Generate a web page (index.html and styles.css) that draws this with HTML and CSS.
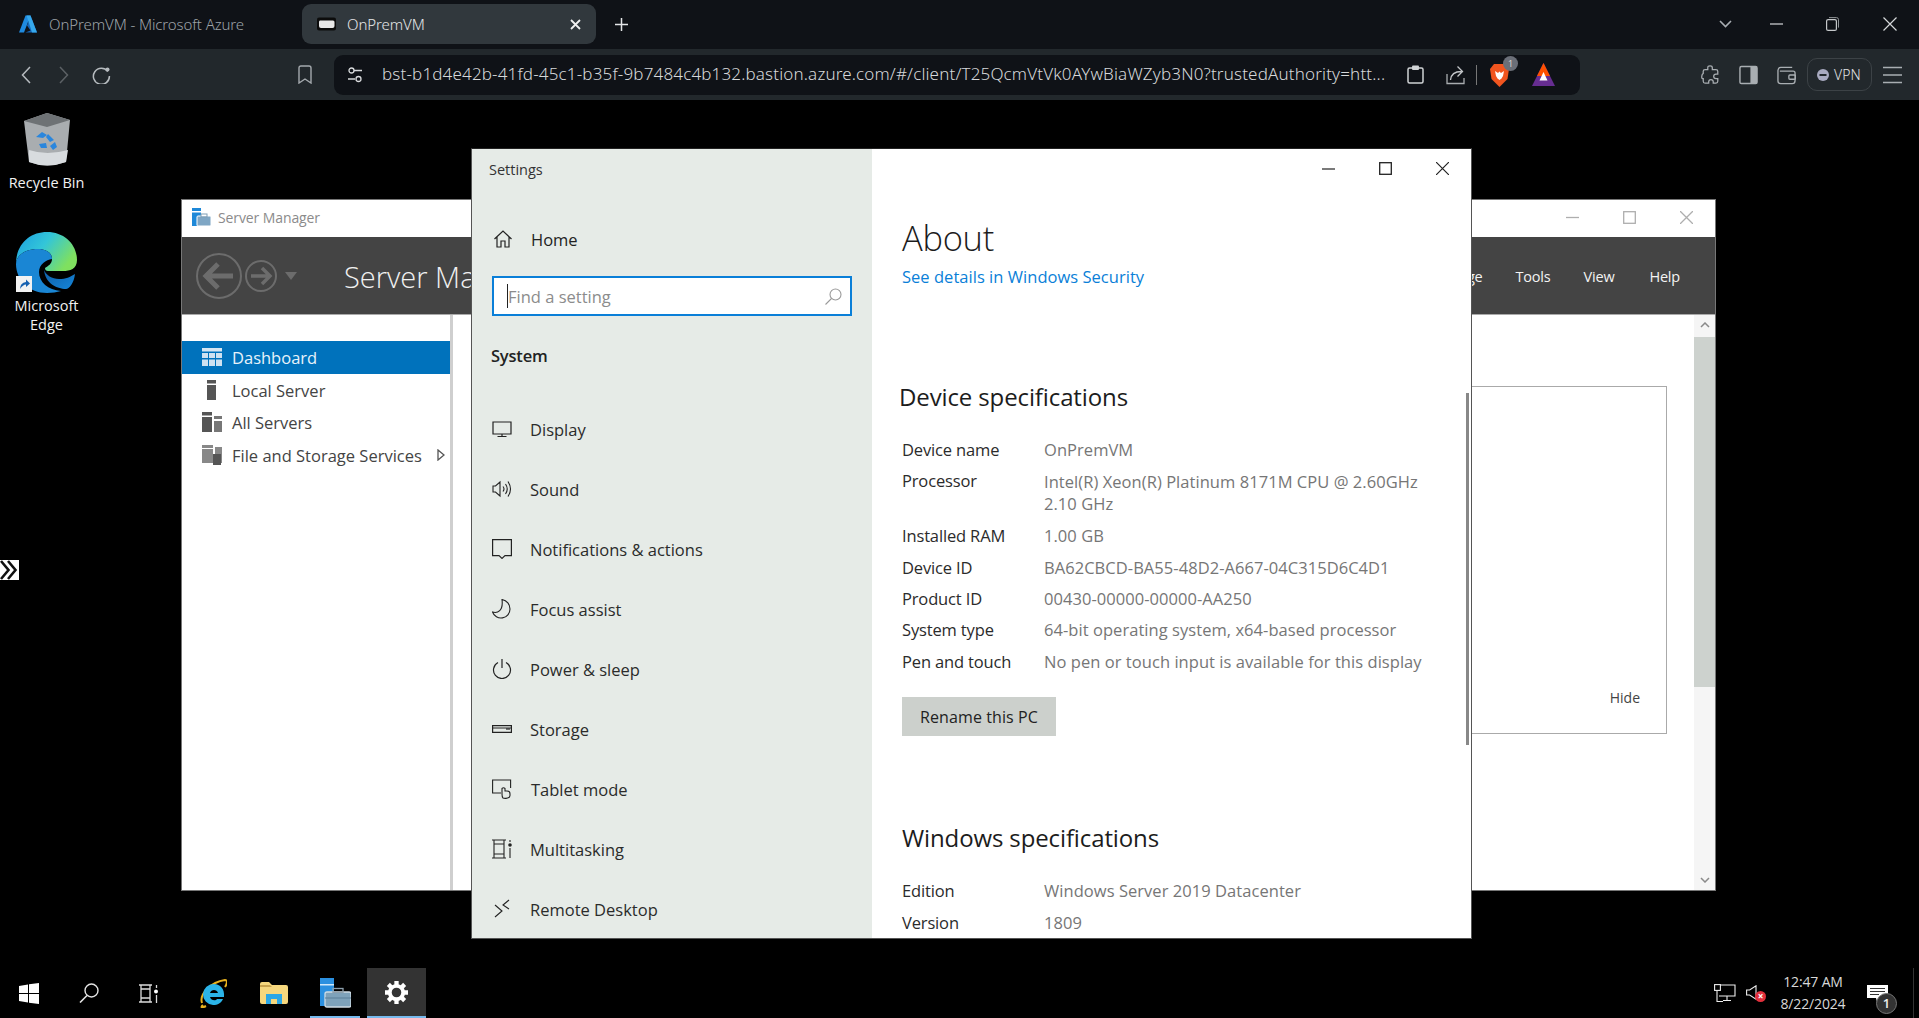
FILE: index.html
```html
<!DOCTYPE html>
<html lang="en">
<head>
<meta charset="utf-8">
<title>OnPremVM</title>
<link rel="stylesheet" href="styles.css">
</head>
<body>
<div class="tabstrip">
  <div class="tab">
    <svg class="fav-azure" viewBox="0 0 18 18"><path d="M6.500 0.500h5L5 17.500H0z" fill="#1f8ae0"/><path d="M11.500 0.500L18 17.500H6.500l5-2-3.500-5z" fill="#1565b8"/><path d="M7.500 0.500h4L18 17.500h-5z" fill="#36a8ec"/></svg>
    <span class="tab-label">OnPremVM - Microsoft Azure</span>
  </div>
  <div class="tab tab-active">
    <svg class="fav-cloud" viewBox="0 0 19 14"><rect x="0" y="0.500" width="19" height="13" rx="2" fill="#0c0c0c"/><path d="M3 3.500h13q1.500 0 1.500 1.500v4q0 2-2 2H4q-2 0-2-2V5q0-1.500 1-1.500z" fill="#e8e8e8"/></svg>
    <span class="tab-label tab-label-on">OnPremVM</span>
    <svg class="tab-x" viewBox="0 0 11 11"><path d="M1 1l9 9M10 1l-9 9" stroke="#f0f0f0" stroke-width="1.800"/></svg>
  </div>
  <svg class="tab-plus" viewBox="0 0 13 13"><path d="M6.500 0v13M0 6.500h13" stroke="#e4e6e8" stroke-width="1.500"/></svg>
  <div class="win-ctrls">
    <svg class="ic-chev" viewBox="0 0 13 8"><path d="M1 1l5.500 5.500L12 1" fill="none" stroke="#a9aeb3" stroke-width="1.600"/></svg>
    <svg class="ic-min" viewBox="0 0 13 2"><path d="M0 1h13" stroke="#d5d8da" stroke-width="1.200"/></svg>
    <svg class="ic-rest" viewBox="0 0 13 14"><rect x="0.600" y="2.600" width="9.800" height="10.800" rx="1.500" fill="none" stroke="#c5c8ca" stroke-width="1.200"/><path d="M3 .6h7.500q2 0 2 2v8" fill="none" stroke="#8f9396" stroke-width="1"/></svg>
    <svg class="ic-close" viewBox="0 0 14 14"><path d="M.5.5l13 13M13.500.5l-13 13" stroke="#d5d8da" stroke-width="1.200"/></svg>
  </div>
</div>

<div class="toolbar">
  <svg class="tb-back" viewBox="0 0 10 18"><path d="M9 1L1.500 9 9 17" fill="none" stroke="#b6bbbf" stroke-width="1.500"/></svg>
  <svg class="tb-fwd" viewBox="0 0 10 18"><path d="M1 1l7.500 8L1 17" fill="none" stroke="#5c6165" stroke-width="1.500"/></svg>
  <svg class="tb-reload" viewBox="0 0 19 19"><path d="M15.800 6.500A8 8 0 1 0 17.400 11" fill="none" stroke="#b6bbbf" stroke-width="1.500"/><circle cx="15.500" cy="4.500" r="2" fill="#b6bbbf"/></svg>
  <svg class="tb-bookmark" viewBox="0 0 14 19"><path d="M1 3q0-2 2-2h8q2 0 2 2v15l-6-4-6 4z" fill="none" stroke="#a4a9ad" stroke-width="1.400"/></svg>
  <div class="urlbar">
    <svg class="url-tune" viewBox="0 0 16 16"><circle cx="4.500" cy="3.500" r="2.500" fill="none" stroke="#d8dadc" stroke-width="1.300"/><path d="M7 3.500h8M1 12h7" stroke="#d8dadc" stroke-width="1.300"/><circle cx="11.500" cy="12" r="2.500" fill="none" stroke="#d8dadc" stroke-width="1.300"/></svg>
    <span class="url-text">bst-b1d4e42b-41fd-45c1-b35f-9b7484c4b132.bastion.azure.com/#/client/T25QcmVtVk0AYwBiaWZyb3N0?trustedAuthority=htt...</span>
    <svg class="url-clip" viewBox="0 0 17 19"><rect x="1" y="3" width="15" height="15" rx="1.500" fill="none" stroke="#d0d3d5" stroke-width="1.500"/><rect x="5" y="0.500" width="7" height="4.500" rx="1" fill="#d0d3d5"/></svg>
    <svg class="url-share" viewBox="0 0 19 20"><path d="M1 9v9.500h17V13" fill="none" stroke="#a8acaf" stroke-width="1.300"/><path d="M4.500 15C5 9 9 6.500 15.500 6.500M11.500 1.500l5 5-5 5" fill="none" stroke="#c3c6c9" stroke-width="1.300"/></svg>
    <span class="url-sep"></span>
    <div class="brave">
      <svg class="brave-lion" viewBox="0 0 19 24"><path d="M4 1h11l4 5-1.500 10-8 8-8-8L0 6z" fill="#f1551f"/><path d="M5 8l3 2 1.500-1.500L11 10l3-2-1 5-1.500 2.500-2 1.500-2-1.500L6 13z" fill="#fff"/></svg>
      <span class="brave-badge">1</span>
    </div>
    <svg class="url-bat" viewBox="0 0 23 23"><path d="M11.500 0L23 23H0z" fill="#662d91"/><path d="M11.500 0L18 13H5z" fill="#ff5000"/><path d="M11.500 9l4 8.500h-8z" fill="#fff"/></svg>
  </div>
  <div class="tb-right">
    <svg class="tb-ic" viewBox="0 0 20 22"><path d="M7 3q0-2 2.500-2T12 3v2h4q2 0 2 2v3h-2q-2.500 0-2.500 2.500T16 15h2v3q0 2-2 2h-3v-1.500q0-2.500-2.500-2.500T8 18.500V20H4q-2 0-2-2v-3H1.500Q0 15 .5 12t2-2.500H2V7q0-2 2-2h3z" fill="none" stroke="#a9aeb2" stroke-width="1.400"/></svg>
    <svg class="tb-ic" viewBox="0 0 20 20"><rect x="1" y="1" width="18" height="18" rx="1.500" fill="none" stroke="#a9aeb2" stroke-width="1.500"/><rect x="12" y="1" width="7" height="18" fill="#a9aeb2"/></svg>
    <svg class="tb-ic" viewBox="0 0 20 20"><path d="M16 2H4Q1.500 2 1 5v11q0 3 3 3h12q3 0 3-3V8q0-2-2-2H3" fill="none" stroke="#a9aeb2" stroke-width="1.400"/><rect x="12.500" y="10" width="7" height="4.500" rx="1" fill="none" stroke="#a9aeb2" stroke-width="1.400"/></svg>
    <div class="vpn">
      <svg class="vpn-dot" viewBox="0 0 12 12"><circle cx="6" cy="6" r="6" fill="#a8aac0"/><path d="M2.500 6h7" stroke="#22282c" stroke-width="2"/></svg>
      <span class="vpn-text">VPN</span>
    </div>
    <svg class="tb-menu" viewBox="0 0 19 18"><path d="M0 1.500h19M0 9h19M0 16.500h19" stroke="#a9aeb2" stroke-width="1.400"/></svg>
  </div>
</div>

<div class="desktop">
  <div class="chevrons">
    <svg viewBox="0 0 19 20"><path d="M0 0h19v20H0z" fill="#fff"/><path d="M1 1l7.500 9L1 19M8 1l7.500 9L8 19" fill="none" stroke="#111" stroke-width="2.600"/></svg>
  </div>

  <div class="desk-icon desk-bin">
    <svg class="bin-svg" viewBox="0 0 48 53">
      <path d="M1 8L24 0l23 7-4 42q-19 7-37 0z" fill="#a9adb0"/>
      <path d="M1 8l23 6 23-7-23-7z" fill="#6e7275"/>
      <path d="M6 37q18 6 39 0l-2 12q-19 7-37 0z" fill="#d8dcdf"/>
      <path d="M13 24l6-5 5 3-4 3zM25 21l6 6-4 2-4-5zM16 31l7-1 1 5-6 0zM27 33l5-4 2 5-4 3z" fill="#2a86dd"/>
    </svg>
    <span class="desk-label">Recycle Bin</span>
  </div>

  <div class="desk-icon desk-edge">
    <div class="edge-wrap">
      <svg class="edge-svg" viewBox="0 0 61 61">
        <defs>
          <linearGradient id="edgeA" x1="0" y1="0" x2="1" y2="0.500"><stop offset="0" stop-color="#1b9de2"/><stop offset="0.500" stop-color="#33c6d8"/><stop offset="1" stop-color="#7fe05f"/></linearGradient>
          <linearGradient id="edgeB" x1="0" y1="0" x2="1" y2="1"><stop offset="0" stop-color="#0f5fa8"/><stop offset="1" stop-color="#1585d8"/></linearGradient>
        </defs>
        <path d="M0 32C0 12 14 0 31 0c18 0 30 13 30 28 0 9-7 11-14 11H32c-2 0-3-1-3-3 3-2 7-4 7-9 0-7-7-10-14-10C10 17 0 23 0 32z" fill="url(#edgeA)"/>
        <path d="M0 32c0-9 10-15 22-15 7 0 14 3 14 10-6 1-13 5-13 13 0 10 9 18 22 19-4 1-9 2-14 2C13 61 0 48 0 32z" fill="#1a86d4"/>
        <path d="M28 38c1 13 13 19 22 19 3 0 8-6 9-15-5 3-9 5-16 5-7 0-13-4-15-9z" fill="url(#edgeB)"/>
      </svg>
      <svg class="shortcut-svg" viewBox="0 0 16 16"><rect width="16" height="16" fill="#f2f2f2"/><path d="M4 13q0-6 6-7V3.500L14 7.500 10 11V8.500q-3 0-6 4.500z" fill="#1560b0"/></svg>
    </div>
    <span class="desk-label">Microsoft<br>Edge</span>
  </div>

  <section class="sm-window">
    <header class="sm-title">
      <svg class="sm-title-ic" viewBox="0 0 19 19"><rect x="0" y="0" width="9" height="18" fill="#1e88d8"/><rect x="0" y="3" width="9" height="1.500" fill="#fff"/><rect x="5" y="8" width="14" height="10" rx="1" fill="#7fa6c4" stroke="#fff" stroke-width="1"/><rect x="9" y="6" width="6" height="3" fill="none" stroke="#7f9db4"/></svg>
      <span class="sm-title-text">Server Manager</span>
      <div class="sm-title-ctrls">
        <svg class="sm-ctl" viewBox="0 0 13 13"><path d="M0 6.500h13" stroke="#aeaeae" stroke-width="1.300"/></svg>
        <svg class="sm-ctl" viewBox="0 0 13 13"><rect x=".7" y=".7" width="11.600" height="11.600" fill="none" stroke="#aeaeae" stroke-width="1.300"/></svg>
        <svg class="sm-ctl" viewBox="0 0 13 13"><path d="M0 0l13 13M13 0L0 13" stroke="#aeaeae" stroke-width="1.300"/></svg>
      </div>
    </header>
    <div class="sm-head">
      <svg class="sm-back" viewBox="0 0 46 46"><circle cx="23" cy="23" r="22" fill="none" stroke="#6c6c6c" stroke-width="2"/><path d="M37 23H11M22 11L10 23l12 12" fill="none" stroke="#6c6c6c" stroke-width="5"/></svg>
      <svg class="sm-fwd" viewBox="0 0 32 32"><circle cx="16" cy="16" r="15" fill="none" stroke="#6c6c6c" stroke-width="2"/><path d="M6 16h19M17 8l8 8-8 8" fill="none" stroke="#6c6c6c" stroke-width="3.500"/></svg>
      <svg class="sm-drop" viewBox="0 0 12 8"><path d="M0 0h12L6 8z" fill="#6c6c6c"/></svg>
      <span class="sm-head-title">Server Ma</span>
      <nav class="sm-menu">
        <span>Manage</span><span>Tools</span><span>View</span><span>Help</span>
      </nav>
    </div>
    <div class="sm-body">
      <aside class="sm-side">
        <div class="sm-row sm-row-on">
          <svg class="sm-ic" viewBox="0 0 20 18"><rect width="20" height="3.500" fill="#d5e6f3"/><path d="M0 5h6v5H0zM7 5h6v5H7zM14 5h6v5h-6zM0 11.500h6V18H0zM7 11.500h6V18H7zM14 11.500h6V18h-6z" fill="#cfe2f1"/></svg>
          <span>Dashboard</span>
        </div>
        <div class="sm-row">
          <svg class="sm-ic" viewBox="0 0 20 20"><rect x="5" y="0" width="9" height="3.500" fill="#555"/><rect x="5" y="5" width="9" height="15" fill="#555"/></svg>
          <span>Local Server</span>
        </div>
        <div class="sm-row">
          <svg class="sm-ic" viewBox="0 0 20 20"><rect x="0" y="0" width="10" height="3.500" fill="#555"/><rect x="0" y="5" width="10" height="15" fill="#555"/><rect x="12" y="4" width="8" height="3" fill="#777"/><rect x="12" y="9" width="8" height="11" fill="#777"/></svg>
          <span>All Servers</span>
        </div>
        <div class="sm-row">
          <svg class="sm-ic" viewBox="0 0 20 20"><rect x="0" y="0" width="11" height="3" fill="#888"/><rect x="0" y="4" width="11" height="14" fill="#888"/><rect x="13" y="2" width="7" height="16" fill="#888"/><path d="M11 9h8v11h-8z" fill="#555"/></svg>
          <span class="sm-row-grow">File and Storage Services</span>
          <svg class="sm-tri" viewBox="0 0 8 12"><path d="M1 1l6 5-6 5z" fill="none" stroke="#555" stroke-width="1.300"/></svg>
        </div>
      </aside>
      <div class="sm-main">
        <div class="sm-panel"><span class="sm-hide">Hide</span></div>
      </div>
      <div class="sm-scroll">
        <svg class="sm-arrow" viewBox="0 0 10 6"><path d="M1 5l4-4 4 4" fill="none" stroke="#8a8a8a" stroke-width="1.500"/></svg>
        <div class="sm-thumb"></div>
        <svg class="sm-arrow sm-arrow-down" viewBox="0 0 10 6"><path d="M1 1l4 4 4-4" fill="none" stroke="#8a8a8a" stroke-width="1.500"/></svg>
      </div>
    </div>
  </section>

  <section class="settings">
    <aside class="set-side">
      <div class="set-app">Settings</div>
      <div class="set-home">
        <svg class="set-home-ic" viewBox="0 0 18 18"><path d="M.5 9L9 1l8.500 8M3 7v10h4v-6h4v6h4V7" fill="none" stroke="#222" stroke-width="1.200"/></svg>
        <span>Home</span>
      </div>
      <div class="set-search">
        <span class="set-caret"></span>
        <span class="set-ph">Find a setting</span>
        <svg class="set-search-ic" viewBox="0 0 17 17"><circle cx="10.500" cy="6.500" r="5.500" fill="none" stroke="#9a9a9a" stroke-width="1.100"/><path d="M6.500 10.500L.5 16.500" stroke="#9a9a9a" stroke-width="1.100"/></svg>
      </div>
      <div class="set-system">System</div>
      <nav class="set-nav">
        <div class="set-item">
          <svg class="set-ic" viewBox="0 0 20 20"><path d="M1 3h18v12H1zM10 15v2.500M5.500 17.500h9" fill="none" stroke="#222" stroke-width="1.200"/></svg>
          <span>Display</span>
        </div>
        <div class="set-item">
          <svg class="set-ic" viewBox="0 0 20 20"><path d="M1 7h2.500L8 3v14l-4.500-4H1zM11 7.500q2 2.500 0 5M13.500 5q3.500 5 0 10M16 2.500q5 7.500 0 15" fill="none" stroke="#222" stroke-width="1.100"/></svg>
          <span>Sound</span>
        </div>
        <div class="set-item">
          <svg class="set-ic" viewBox="0 0 20 20"><path d="M.6.6h18.800v16h-6.400L10 19.400 7 16.600H.6z" fill="none" stroke="#222" stroke-width="1.200"/></svg>
          <span>Notifications &amp; actions</span>
        </div>
        <div class="set-item">
          <svg class="set-ic" viewBox="0 0 20 20"><path d="M10 .5c5 1 8 5 8 9.500a9 9 0 0 1-17.500 3c5 1.500 11-1 9.500-12.500z" fill="none" stroke="#222" stroke-width="1.100"/></svg>
          <span>Focus assist</span>
        </div>
        <div class="set-item">
          <svg class="set-ic" viewBox="0 0 20 20"><path d="M6 3.500a8.500 8.500 0 1 0 8 0M10 0v9" fill="none" stroke="#222" stroke-width="1.200"/></svg>
          <span>Power &amp; sleep</span>
        </div>
        <div class="set-item">
          <svg class="set-ic" viewBox="0 0 20 20"><path d="M.6 6.600h18.800v6.800H.6zM.6 9h18.800M15 9v2M17 9v2" fill="none" stroke="#222" stroke-width="1.200"/></svg>
          <span>Storage</span>
        </div>
        <div class="set-item set-item-tablet">
          <svg class="set-ic" viewBox="0 0 20 20"><path d="M9 14H.6V1h18v8M11 19q-1-1-1-4V9.500q1.500-1.500 3 0V12h2q3 0 3 3v1.500Q18 19 14 19.400 12 19.500 11 19z" fill="none" stroke="#222" stroke-width="1.100"/></svg>
          <span>Tablet mode</span>
        </div>
        <div class="set-item">
          <svg class="set-ic" viewBox="0 0 20 20"><path d="M0 1h14M0 19h14M2 1v18M2 5h10v10H2zM12 1v18M18 1v2M18 9v10" fill="none" stroke="#222" stroke-width="1.100"/><circle cx="18" cy="6" r="1.800" fill="#222"/></svg>
          <span>Multitasking</span>
        </div>
        <div class="set-item">
          <svg class="set-ic" viewBox="0 0 20 20"><path d="M3 6l7 6-7 6M17 1l-6 5 6 4" fill="none" stroke="#222" stroke-width="1.100"/></svg>
          <span>Remote Desktop</span>
        </div>
      </nav>
    </aside>
    <main class="set-main">
      <div class="set-ctrls">
        <svg class="set-ctl" viewBox="0 0 13 13"><path d="M0 7h13" stroke="#222" stroke-width="1.200"/></svg>
        <svg class="set-ctl" viewBox="0 0 13 13"><rect x=".7" y=".7" width="11.600" height="11.600" fill="none" stroke="#222" stroke-width="1.300"/></svg>
        <svg class="set-ctl" viewBox="0 0 13 13"><path d="M0 0l13 13M13 0L0 13" stroke="#222" stroke-width="1.200"/></svg>
      </div>
      <h1 class="about">About</h1>
      <a class="sec-link">See details in Windows Security</a>
      <h2 class="sec-title sec-device">Device specifications</h2>
      <dl class="specs">
        <dt>Device name</dt><dd>OnPremVM</dd>
        <dt>Processor</dt><dd class="dd-two">Intel(R) Xeon(R) Platinum 8171M CPU @ 2.60GHz<br>2.10 GHz</dd>
        <dt>Installed RAM</dt><dd>1.00 GB</dd>
        <dt>Device ID</dt><dd>BA62CBCD-BA55-48D2-A667-04C315D6C4D1</dd>
        <dt>Product ID</dt><dd>00430-00000-00000-AA250</dd>
        <dt>System type</dt><dd>64-bit operating system, x64-based processor</dd>
        <dt>Pen and touch</dt><dd>No pen or touch input is available for this display</dd>
      </dl>
      <div class="rename">Rename this PC</div>
      <h2 class="sec-title sec-windows">Windows specifications</h2>
      <dl class="specs">
        <dt>Edition</dt><dd>Windows Server 2019 Datacenter</dd>
        <dt>Version</dt><dd>1809</dd>
      </dl>
      <div class="set-scroll"></div>
    </main>
  </section>

  <footer class="taskbar">
    <svg class="tk-win" viewBox="0 0 20 21"><path d="M0 3l9-1.500V10H0zM10 1.300L20 0v10H10zM0 11h9v8.500L0 18zM10 11h10v10l-10-1.300z" fill="#fff"/></svg>
    <svg class="tk-search" viewBox="0 0 20 20"><circle cx="12.500" cy="7.500" r="6.500" fill="none" stroke="#e4e4e4" stroke-width="1.400"/><path d="M8 12.500L1 19.500" stroke="#e4e4e4" stroke-width="1.600"/></svg>
    <svg class="tk-view" viewBox="0 0 19 19"><path d="M0 1h13M0 18h13M2 1v17M2 5h9v9H2zM11 1v17M17.500 1v3M17.500 11v8" fill="none" stroke="#dcdcdc" stroke-width="1.300"/><circle cx="17" cy="7.500" r="2" fill="#fff"/></svg>
    <svg class="tk-ie" viewBox="0 0 28 29"><path d="M3 24C0 15 12 3 26 1c3 0 2 4 0 7" fill="none" stroke="#e8b21f" stroke-width="2"/><path d="M4 26C1 29 3 29 7 27" fill="none" stroke="#e8b21f" stroke-width="2"/><path d="M15 5a10.500 10.500 0 0 0-1 21c5 0 8-2 10-6h-6c-1 2-6 2-7-2h14C26 10 21 5 15 5zm-4 9c1-4 7-4 8 0z" fill="#2bb4e8"/></svg>
    <svg class="tk-folder" viewBox="0 0 28 22"><path d="M0 2q0-2 2-2h7l3 3h14q2 0 2 2v15q0 2-2 2H2q-2 0-2-2z" fill="#f6d77d"/><path d="M0 3h10l2 2H0z" fill="#c9a34c"/><path d="M6 12h16v10h-5v-5h-6v5H6z" fill="#2ba7e6"/></svg>
    <svg class="tk-sm" viewBox="0 0 31 30"><rect x="0" y="0" width="14" height="28" fill="#2b90e0"/><rect x="0" y="6" width="14" height="1.500" fill="#d0e8fa"/><rect x="5" y="14" width="26" height="15" rx="2" fill="#7ea2ba" stroke="#cfdbe4" stroke-width="1.300"/><rect x="13" y="10.500" width="10" height="4" fill="none" stroke="#8ea0ad" stroke-width="1.300"/><path d="M5 20h26" stroke="#5a7e98"/></svg>
    <span class="tk-sm-line"></span>
    <div class="tk-settings">
      <svg class="tk-gear" viewBox="0 0 24 24"><circle cx="12" cy="12" r="7" fill="none" stroke="#fff" stroke-width="4"/><path d="M12 0v5M12 19v5M0 12h5M19 12h5M3.500 3.500L7 7M17 17l3.500 3.500M20.500 3.500L17 7M7 17l-3.500 3.500" stroke="#fff" stroke-width="4.500"/></svg>
    </div>
    <div class="tray">
      <svg class="tray-net" viewBox="0 0 22 18"><path d="M5 1h16v11H5M13 12v4.500M9 16.500h8M3 6v11.500h6" fill="none" stroke="#eee" stroke-width="1.100"/><rect x=".6" y=".6" width="5.800" height="5.800" fill="#000" stroke="#eee" stroke-width="1.100"/></svg>
      <div class="tray-vol">
        <svg class="tray-spk" viewBox="0 0 11 15"><path d="M.6 5h3L10 .8v13.400L3.600 10h-3z" fill="none" stroke="#eee" stroke-width="1.100"/></svg>
        <span class="tray-mute">×</span>
      </div>
      <div class="clock"><span>12:47 AM</span><span>8/22/2024</span></div>
      <div class="notif">
        <svg class="notif-ic" viewBox="0 0 21 17"><path d="M0 0h21v13h-8l-3 4-1-4H0z" fill="#fff"/><path d="M3 3.500h15M3 6.500h15M3 9.500h9" stroke="#333" stroke-width="1"/></svg>
        <span class="notif-badge">1</span>
      </div>
      <span class="tray-end"></span>
    </div>
  </footer>
</div>
</body>
</html>
```

FILE: styles.css
```css
* { box-sizing: border-box; }
html, body { margin: 0; height: 100%; }
body {
  width: 1919px; height: 1018px; overflow: hidden;
  display: flex; flex-direction: column;
  background: #000;
  font-family: "Open Sans", "Noto Sans", sans-serif;
  color: #222;
}
svg { display: block; flex: none; }

/* browser tab strip */
.tabstrip {
  height: 49px; flex: none; background: #0f1217;
  display: flex; align-items: center; padding: 0 0 1px 6px;
}
.tab {
  width: 296px; height: 40px; display: flex; align-items: center;
  padding-left: 13px; border-radius: 9px;
}
.tab-active { width: 294px; background: #31383d; padding-left: 15px; margin-right: 19px; }
.fav-azure { width: 18px; height: 18px; margin-right: 12px; }
.fav-cloud { width: 19px; height: 14px; margin-right: 11px; }
.tab-label { font-family: "Noto Sans", sans-serif; font-size: 15px; color: #9ea3a8; font-weight: 300; white-space: nowrap; letter-spacing: -.1px; }
.tab-label-on { color: #e4e6e8; flex: 1; }
.tab-x { width: 11px; height: 11px; margin-right: 15px; }
.tab-plus { width: 13px; height: 13px; }
.win-ctrls { margin-left: auto; display: flex; align-items: center; padding-right: 22px; }
.ic-chev { width: 13px; height: 8px; margin-right: 38px; }
.ic-min { width: 13px; height: 2px; margin-right: 43px; }
.ic-rest { width: 13px; height: 14px; margin-right: 44px; }
.ic-close { width: 14px; height: 14px; }

/* browser toolbar */
.toolbar {
  height: 51px; flex: none; background: #22282c;
  display: flex; align-items: center; padding-left: 21px;
}
.tb-back { width: 10px; height: 18px; margin-right: 28px; }
.tb-fwd { width: 10px; height: 18px; margin-right: 23px; }
.tb-reload { width: 19px; height: 19px; margin-right: 187px; }
.tb-bookmark { width: 14px; height: 19px; margin-right: 22px; }
.urlbar {
  width: 1246px; height: 40px; background: #0f1217; border-radius: 9px;
  display: flex; align-items: center; padding-left: 13px;
}
.url-tune { width: 16px; height: 16px; margin-right: 19px; }
.url-text {
  width: 1003px; margin-right: 22px; padding-bottom: 2px; white-space: nowrap;
  font-family: "Noto Sans", sans-serif; font-size: 17px; color: #d6d8da; font-weight: 300; letter-spacing: .16px;
}
.url-clip { width: 17px; height: 19px; margin-right: 22px; }
.url-share { width: 19px; height: 20px; margin-right: 11px; }
.url-sep { width: 1px; height: 20px; background: #777; margin-right: 13px; }
.brave { position: relative; width: 19px; height: 24px; margin-right: 23px; }
.brave-lion { width: 19px; height: 24px; }
.brave-badge {
  position: absolute; left: 13px; top: -7px; width: 15px; height: 15px; border-radius: 50%;
  background: #6b6f78; color: #ddd; font-size: 9px; line-height: 15px; text-align: center;
}
.url-bat { width: 23px; height: 23px; }
.tb-right { display: flex; align-items: center; margin-left: 121px; }
.tb-ic { width: 19px; height: 20px; margin-right: 19px; }
.vpn {
  width: 65px; height: 33px; margin-left: -8px; margin-right: 11px;
  border: 1px solid #3c4246; border-radius: 10px;
  display: flex; align-items: center; padding-left: 9px; gap: 5px;
}
.vpn-dot { width: 12px; height: 12px; }
.vpn-text { font-family: "Noto Sans", sans-serif; font-size: 14px; color: #e0e2e4; font-weight: 300; }
.tb-menu { width: 19px; height: 18px; }

/* desktop canvas */
.desktop { position: relative; flex: 1; background: #000; }
.chevrons { position: absolute; left: 0; top: 460px; width: 19px; height: 20px; }
.desk-icon {
  position: absolute; left: 0; width: 93px;
  display: flex; flex-direction: column; align-items: center;
}
.desk-bin { top: 13px; }
.desk-edge { top: 132px; }
.bin-svg { width: 48px; height: 53px; margin-bottom: 7px; }
.edge-wrap { position: relative; width: 61px; height: 61px; margin-bottom: 3px; }
.edge-svg { width: 61px; height: 61px; }
.shortcut-svg { position: absolute; left: 0; bottom: 1px; width: 16px; height: 16px; }
.desk-label { font-size: 14.500px; line-height: 19px; color: #f2f2f2; text-align: center; }

/* server manager window */
.sm-window {
  position: absolute; left: 181px; top: 99px; width: 1535px; height: 692px;
  background: #fff; display: flex; flex-direction: column;
  border: 1px solid #777;
}
.sm-title { height: 37px; flex: none; display: flex; align-items: center; padding: 0 0 2px 10px; }
.sm-title-ic { width: 19px; height: 19px; margin-right: 7px; }
.sm-title-text { font-size: 14px; color: #8b8b8b; letter-spacing: -.1px; }
.sm-title-ctrls { margin-left: auto; display: flex; gap: 44px; padding-right: 22px; }
.sm-ctl { width: 13px; height: 13px; }
.sm-head {
  height: 78px; flex: none; background: #444; display: flex; align-items: center;
  padding-left: 14px; border-bottom: 1px solid #aaa;
}
.sm-back { width: 46px; height: 46px; margin-right: 3px; }
.sm-fwd { width: 32px; height: 32px; margin-right: 8px; }
.sm-drop { width: 12px; height: 8px; margin-right: 47px; }
.sm-head-title { white-space: nowrap; padding-top: 2px; font-size: 29px; font-weight: 300; color: #f0f0f0; }
.sm-menu {
  margin-left: auto; display: flex; gap: 33px; padding: 2px 35px 0 0;
  font-size: 14.500px; color: #f3f3f3; letter-spacing: -.2px;
}
.sm-menu span:last-child { margin-left: 2px; }
.sm-body { flex: 1; display: flex; min-height: 0; }
.sm-side {
  width: 271px; flex: none; border-right: 3px solid #cfcfcf; padding-top: 26px;
}
.sm-row {
  height: 32.600px; display: flex; align-items: center; padding-left: 20px;
  font-size: 16.500px; color: #444;
}
.sm-row span { padding-top: 1px; }
.sm-row-on { background: #0072bc; color: #e8f2fa; }
.sm-ic { width: 20px; height: 20px; margin-right: 10px; }
.sm-row-grow { flex: 1; }
.sm-tri { width: 8px; height: 12px; margin-right: 5px; }
.sm-main { flex: 1; padding: 71px 27px 0 100px; }
.sm-panel {
  height: 348px; border: 1px solid #aaa;
  display: flex; align-items: flex-end; justify-content: flex-end; padding: 0 26px 26px 0;
}
.sm-hide { font-size: 14px; color: #444; }
.sm-scroll {
  width: 21px; flex: none; background: #f5f5f5;
  display: flex; flex-direction: column; align-items: center;
}
.sm-arrow { width: 10px; height: 6px; margin: 7px 0; }
.sm-thumb { width: 100%; height: 350px; background: #cdd2ce; margin-top: 2px; }
.sm-arrow-down { margin-top: auto; margin-bottom: 7px; }

/* settings window */
.settings {
  position: absolute; left: 471px; top: 48px; width: 1001px; height: 791px;
  display: flex; border: 1px solid #555; border-top-color: #222; background: #fff;
}
.set-side { width: 400px; flex: none; background: #e6ebe7; padding-left: 20px; overflow: hidden; }
.set-app { height: 40px; padding-top: 11px; margin-left: -3px; font-size: 14.500px; line-height: 20px; color: #333; }
.set-home {
  height: 72px; padding-top: 28px; display: flex; align-items: center;
  padding-left: 2px; font-size: 16.500px; color: #222;
}
.set-home-ic { width: 18px; height: 18px; margin-right: 19px; }
.set-search {
  width: 360px; height: 40px; margin-top: 15px; background: #fff; border: 2px solid #0a7fd8;
  display: flex; align-items: center; padding-left: 13px;
}
.set-caret { width: 1px; height: 24px; background: #222; }
.set-ph { flex: 1; font-size: 16.500px; color: #8c8c8c; }
.set-search-ic { width: 17px; height: 17px; margin-right: 8px; }
.set-system { margin: 25px 0 0 -1px; height: 30px; line-height: 30px; font-size: 16.500px; font-weight: 600; color: #222; letter-spacing: -.2px; }
.set-nav { margin-top: 28px; }
.set-item {
  height: 60px; display: flex; align-items: center;
  font-size: 16.500px; color: #2b2b2b; white-space: nowrap;
}
.set-item-tablet span { margin-left: 1px; }
.set-ic { width: 20px; height: 20px; margin-right: 18px; }

.set-main { position: relative; flex: 1; padding: 0 0 0 30px; overflow: hidden; }
.set-ctrls { position: absolute; top: 13px; right: 22px; display: flex; gap: 44px; }
.set-ctl { width: 13px; height: 13px; }
.about { margin: 0; padding-top: 67px; font-size: 34.500px; line-height: 44px; font-weight: 300; color: #1c1c1c; letter-spacing: -.3px; }
.sec-link { display: block; margin-top: 5px; font-size: 16.500px; line-height: 24px; color: #0a7fd8; letter-spacing: .03px; }
.sec-title { margin: 0; font-size: 24px; line-height: 32px; font-weight: 400; color: #1c1c1c; letter-spacing: -.12px; }
.sec-device { margin-top: 92px; margin-left: -3px; }
.sec-windows { margin-top: 86px; margin-bottom: 1px; }
.specs {
  margin: 0; display: grid; grid-template-columns: 142px 1fr; row-gap: 9.400px;
  font-size: 16.500px; line-height: 22px; padding-top: 25.500px;
}
.specs dt { color: #2b2b2b; letter-spacing: -.15px; }
.specs dd { margin: 0; color: #767676; letter-spacing: .05px; }
.specs .dd-two { padding: 1px 0; }
.rename {
  width: 154px; height: 39px; margin-top: 24px; padding-top: 1px; background: #ccd0cc;
  display: flex; align-items: center; justify-content: center;
  font-size: 16px; color: #222; letter-spacing: .1px;
}
.set-scroll { position: absolute; right: 2px; top: 244px; width: 3px; height: 352px; background: #888; }

/* taskbar */
.taskbar {
  position: absolute; left: 0; right: 0; bottom: 0; height: 50px; background: #000;
  display: flex; align-items: center; padding-left: 19px;
}
.tk-win { width: 20px; height: 21px; margin-right: 40px; }
.tk-search { width: 20px; height: 20px; margin-right: 40px; }
.tk-view { width: 19px; height: 19px; margin-right: 41px; }
.tk-ie { width: 28px; height: 29px; margin-right: 33px; }
.tk-folder { width: 28px; height: 22px; margin-right: 32px; }
.tk-sm { width: 31px; height: 30px; margin-right: 16px; }
.tk-sm-line { position: absolute; left: 310px; bottom: 0; width: 50px; height: 2px; background: #76b9ed; }
.tk-settings {
  width: 59px; height: 50px; background: #333; border-bottom: 2px solid #76b9ed;
  display: flex; align-items: center; justify-content: center;
}
.tk-gear { width: 23px; height: 23px; }
.tray { margin-left: auto; display: flex; align-items: center; height: 100%; }
.tray-net { width: 22px; height: 18px; margin-right: 10px; }
.tray-vol { position: relative; width: 21px; height: 16px; margin-right: 13px; }
.tray-spk { width: 11px; height: 15px; }
.tray-mute {
  position: absolute; left: 9px; top: 6px; width: 11px; height: 11px; border-radius: 50%;
  background: #e2303c; color: #fff; font-size: 10px; line-height: 10px; text-align: center; font-weight: 700;
}
.clock {
  width: 66px; display: flex; flex-direction: column; align-items: center;
  font-size: 14px; line-height: 22px; color: #d8d8d8; letter-spacing: -.15px; margin-right: 21px;
}
.notif { position: relative; width: 21px; height: 17px; margin-right: 25px; }
.notif-ic { width: 21px; height: 17px; }
.notif-badge {
  position: absolute; left: 9px; top: 8px; width: 21px; height: 21px; border-radius: 50%;
  background: #333; border: 1px solid #777; color: #eee; font-size: 13px; font-weight: 600; line-height: 19px; text-align: center;
}
.tray-end { width: 1px; height: 100%; background: #333; margin-right: 5px; }
```
